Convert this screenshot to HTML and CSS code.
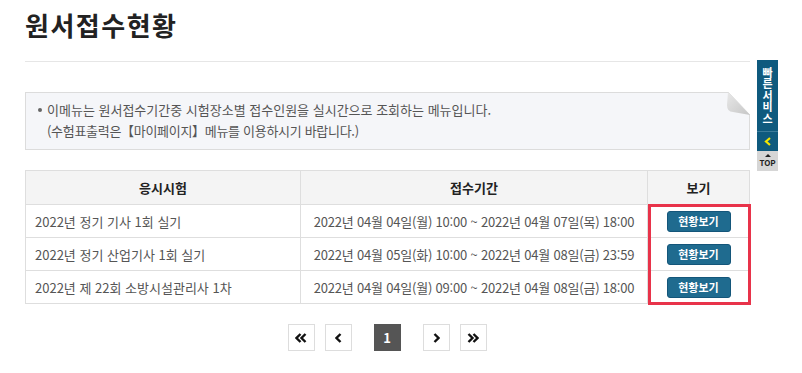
FILE: index.html
```html
<!DOCTYPE html>
<html lang="ko">
<head>
    <meta charset="UTF-8">
    <meta name="viewport" content="width=device-width, initial-scale=1.0">
    <title>원서접수현황</title>
    <link rel="stylesheet" href="styles.css">
</head>
<body>

    <div class="wrap">
        <h2 class="page-title">원서접수현황</h2>

        <div class="notice">
            <p class="notice-item">이메뉴는 원서접수기간중 시험장소별 접수인원을 실시간으로 조회하는 메뉴입니다.</p>
            <p class="notice-sub">(수험표출력은【마이페이지】메뉴를 이용하시기 바랍니다.)</p>
            <svg class="notice-fold" width="24" height="25" viewBox="0 0 24 25">
                <defs>
                    <linearGradient id="fold" x1="0" y1="0" x2="1" y2="1">
                        <stop offset="0" stop-color="#e8e8e8"/>
                        <stop offset="1" stop-color="#c6c6c6"/>
                    </linearGradient>
                </defs>
                <polygon points="2,0 24,0 24,23" fill="#fff"/>
                <line x1="2" y1="0" x2="24" y2="23" stroke="#dcdcdc" stroke-width="1"/>
                <path d="M2,0 L1,13 Q1,20 7,20 L24,23 Z" fill="url(#fold)"/>
            </svg>
        </div>

        <div class="table-box">
            <table class="status-table">
                <thead>
                    <tr>
                        <th class="col-exam">응시시험</th>
                        <th class="col-date">접수기간</th>
                        <th class="col-view">보기</th>
                    </tr>
                </thead>
                <tbody>
                    <tr>
                        <td class="exam">2022년 정기 기사 1회 실기</td>
                        <td class="date">2022년 04월 04일(월) 10:00 ~ 2022년 04월 07일(목) 18:00</td>
                        <td><button class="btn-view">현황보기</button></td>
                    </tr>
                    <tr>
                        <td class="exam">2022년 정기 산업기사 1회 실기</td>
                        <td class="date">2022년 04월 05일(화) 10:00 ~ 2022년 04월 08일(금) 23:59</td>
                        <td><button class="btn-view">현황보기</button></td>
                    </tr>
                    <tr>
                        <td class="exam">2022년 제 22회 소방시설관리사 1차</td>
                        <td class="date">2022년 04월 04일(월) 09:00 ~ 2022년 04월 08일(금) 18:00</td>
                        <td><button class="btn-view">현황보기</button></td>
                    </tr>
                </tbody>
            </table>
            <div class="highlight"></div>
        </div>

        <div class="pager">
            <div class="pager-group">
                <a class="page-btn" href="#" title="처음">
                    <svg width="12" height="10" viewBox="0 0 12 10"><path d="M5.5 1 L1.5 5 L5.5 9 M10.5 1 L6.5 5 L10.5 9" fill="none" stroke="#111" stroke-width="2.4"/></svg>
                </a>
                <a class="page-btn" href="#" title="이전">
                    <svg width="7" height="10" viewBox="0 0 7 10"><path d="M5.5 1 L1.5 5 L5.5 9" fill="none" stroke="#111" stroke-width="2.4"/></svg>
                </a>
            </div>
            <a class="page-num on" href="#">1</a>
            <div class="pager-group">
                <a class="page-btn" href="#" title="다음">
                    <svg width="7" height="10" viewBox="0 0 7 10"><path d="M1.5 1 L5.5 5 L1.5 9" fill="none" stroke="#111" stroke-width="2.4"/></svg>
                </a>
                <a class="page-btn" href="#" title="마지막">
                    <svg width="12" height="10" viewBox="0 0 12 10"><path d="M1.5 1 L5.5 5 L1.5 9 M6.5 1 L10.5 5 L6.5 9" fill="none" stroke="#111" stroke-width="2.4"/></svg>
                </a>
            </div>
        </div>
    </div>

    <div class="quick-menu">
        <div class="quick-title">빠른서비스</div>
        <div class="quick-toggle">
            <svg width="8" height="9" viewBox="0 0 8 9"><path d="M6 1 L2 4.5 L6 8" fill="none" stroke="#f4e600" stroke-width="2.2"/></svg>
        </div>
        <a class="quick-top" href="#"><span class="top-arrow"></span>TOP</a>
    </div>

</body>
</html>
```

FILE: styles.css
```css
body {
    margin: 0;
    font-family: "Noto Sans CJK KR", "Noto Sans", sans-serif;
    color: #555;
    background: #fff;
}

.wrap {
    width: 725px;
    margin-left: 25px;
    padding-top: 6px;
}

.page-title {
    margin: 0;
    padding-bottom: 17px;
    font-size: 26px;
    line-height: 38px;
    font-weight: bold;
    color: #222;
    letter-spacing: 1.5px;
    border-bottom: 1px solid #e6e6e6;
}

.notice {
    position: relative;
    margin-top: 30px;
    padding: 6px 0 8px 12px;
    background: #f5f6f9;
    border: 1px solid #dcdcdc;
    font-size: 13px;
    line-height: 21px;
    color: #555;
}

.notice p {
    margin: 0;
}

.notice-item {
    position: relative;
    padding-left: 9px;
}

.notice-item:before {
    content: "";
    position: absolute;
    left: 0;
    top: 9px;
    width: 4px;
    height: 4px;
    border-radius: 50%;
    background: #666;
}

.notice-sub {
    padding-left: 9px;
    letter-spacing: -0.3px;
}

.notice-fold {
    position: absolute;
    top: -1px;
    right: -1px;
    display: block;
}

.table-box {
    position: relative;
    margin-top: 20px;
}

.status-table {
    width: 100%;
    border-collapse: collapse;
    font-size: 13px;
    color: #555;
}

.status-table th,
.status-table td {
    border: 1px solid #dedede;
    text-align: center;
    padding: 0;
}

.status-table th {
    height: 33px;
    background: #f4f4f4;
    color: #222;
    font-weight: bold;
}

.status-table td {
    height: 32px;
}

.status-table td.exam {
    text-align: left;
    padding-left: 9px;
}

.status-table td.date {
    letter-spacing: -0.2px;
}

.col-exam {
    width: 274px;
}

.col-view {
    width: 101px;
}

.btn-view {
    width: 64px;
    height: 21px;
    padding: 0;
    border: 1px solid #14567a;
    border-radius: 3px;
    background: #1f6b8f;
    color: #fff;
    font-family: inherit;
    font-size: 11px;
    font-weight: bold;
    line-height: 19px;
}

.highlight {
    position: absolute;
    top: 34px;
    right: -1px;
    bottom: -1px;
    width: 97px;
    border: 3px solid #e8334a;
}

.pager {
    display: flex;
    justify-content: center;
    align-items: center;
    gap: 22px;
    margin-top: 20px;
    padding-right: 1px;
}

.pager-group {
    display: flex;
    gap: 10px;
}

.page-btn,
.page-num {
    display: flex;
    align-items: center;
    justify-content: center;
    box-sizing: border-box;
    width: 27px;
    height: 27px;
    border: 1px solid #dddddd;
    text-decoration: none;
    color: #111;
}

.page-num.on {
    background: #555;
    border-color: #555;
    color: #fff;
    font-size: 13px;
    font-weight: bold;
}

.quick-menu {
    position: absolute;
    top: 60px;
    left: 757px;
    width: 21px;
}

.quick-title {
    background: #0f5a7e;
    color: #fff;
    font-size: 11px;
    font-weight: bold;
    writing-mode: vertical-rl;
    text-orientation: upright;
    letter-spacing: 0.5px;
    width: 21px;
    height: 72px;
    box-sizing: border-box;
    padding-top: 7px;
    display: flex;
    align-items: center;
    border-bottom: 1px solid #3d7c9b;
}

.quick-toggle {
    display: flex;
    align-items: center;
    justify-content: center;
    background: #0f5a7e;
    height: 19px;
}

.quick-toggle svg {
    display: block;
}

.quick-top {
    display: block;
    height: 20px;
    background: #d6d6d6;
    color: #222;
    font-size: 8px;
    font-weight: bold;
    text-align: center;
    text-decoration: none;
    line-height: 10px;
    padding-top: 1px;
    box-sizing: border-box;
}

.top-arrow {
    display: block;
    width: 0;
    height: 0;
    margin: 2px auto 1px;
    border-left: 3px solid transparent;
    border-right: 3px solid transparent;
    border-bottom: 3px solid #222;
}
```
